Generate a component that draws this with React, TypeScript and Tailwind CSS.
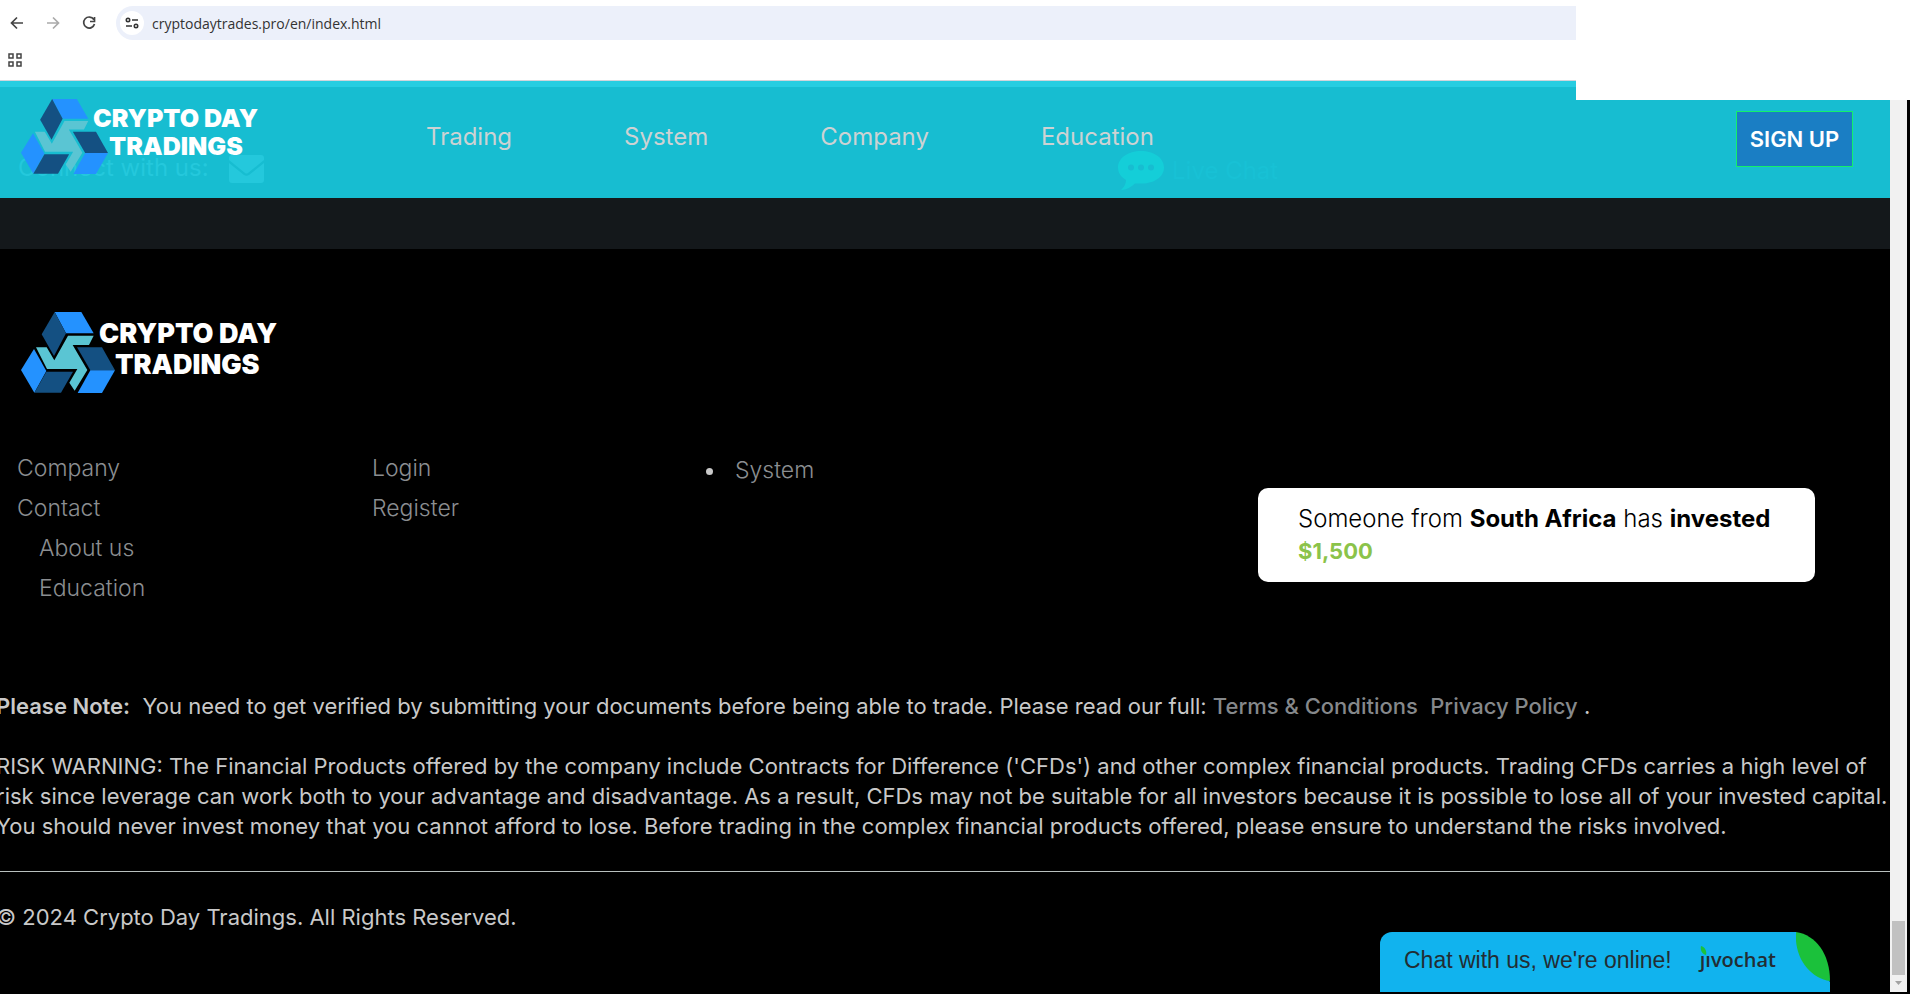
import React from "react";

const navItems = ["Trading", "System", "Company", "Education"];

const LogoMark = ({ className }: { className: string }) => (
  <svg viewBox="63 66 282 243" className={className} aria-hidden="true">
    <path d="M164 66h80l37 64h-83z" fill="#2492ff" />
    <path d="M164 66l34 64-36 68-37-65z" fill="#145082" />
    <path d="M204 137h77l-14 28h-49l44 75-38 62-16-24 24-41h-91l-33-65h32l23 39z" fill="#5ac5d3" />
    <path d="M231 172h75l39 69h-74z" fill="#145082" />
    <path d="M271 241h74l-39 68h-73z" fill="#2492ff" />
    <path d="M102 177l37 66-36 65-40-68z" fill="#2492ff" />
    <path d="M139 245h80l-36 63h-80z" fill="#145082" />
  </svg>
);

const BrowserBar = () => (
  <div className="h-[81px] border-b border-gray-300 bg-white font-['Open_Sans',sans-serif]">
    <div className="flex h-[46px] items-center pl-2">
      <button type="button" aria-label="Back" className="w-9 text-[#444]">
        <svg viewBox="0 0 18 18" className="size-[18px]" fill="none" stroke="currentColor" strokeWidth="1.7">
          <path d="M15 9H4M9 3.500L3.500 9 9 14.500" />
        </svg>
      </button>
      <button type="button" aria-label="Forward" className="w-9 text-[#aaa]">
        <svg viewBox="0 0 18 18" className="size-[18px]" fill="none" stroke="currentColor" strokeWidth="1.7">
          <path d="M3 9h11M9 3.500L14.500 9 9 14.500" />
        </svg>
      </button>
      <button type="button" aria-label="Reload" className="w-9 text-[#444]">
        <svg viewBox="0 0 18 18" className="size-[18px]" fill="none" stroke="currentColor" strokeWidth="1.7">
          <path d="M13.800 5.500A5.500 5.500 0 1 0 14.500 10M14.500 3v4.500H10" />
        </svg>
      </button>
      <div className="flex h-[34px] flex-1 items-center rounded-l-full bg-[#ecf0fa] pl-1">
        <span className="flex size-6 items-center justify-center rounded-full bg-white text-[#333]">
          <svg viewBox="0 0 14 14" className="size-[14px]" fill="none" stroke="currentColor" strokeWidth="1.6">
            <circle cx="3" cy="4" r="1.700" />
            <path d="M7 4h6M1 10h6" />
            <circle cx="11" cy="10" r="1.700" />
          </svg>
        </span>
        <input
          aria-label="Address"
          defaultValue="cryptodaytrades.pro/en/index.html"
          className="ml-2 h-6 flex-1 bg-transparent text-sm text-[#333] outline-none"
        />
      </div>
    </div>
    <button type="button" aria-label="Apps" className="ml-2 block pt-[7px] text-[#444]">
      <svg viewBox="0 0 14 14" className="size-[14px]" fill="none" stroke="currentColor" strokeWidth="1.500">
        <path d="M1 1h4v4H1zM9 1h4v4H9zM1 9h4v4H1zM9 9h4v4H9z" />
      </svg>
    </button>
  </div>
);

const SiteHeader = () => (
  <header className="relative h-[117px] border-t-[6px] border-[#27cde1] bg-[#17bdd1]">
    {/* Contact strip showing faintly through the header */}
    <div className="absolute top-[65px] left-[18px] flex items-center gap-5 text-[#24c8dc]">
      <span className="text-2xl">Connect with us:</span>
      <svg viewBox="0 0 35 28" className="mt-0.5 h-7 w-[35px]">
        <path d="M3 0h29q3 0 3 3v2L19 18q-1.500 1-3 0L0 5V3q0-3 3-3z" fill="currentColor" />
        <path d="M0 8l15 12q2.500 1.500 5 0L35 8v17q0 3-3 3H3q-3 0-3-3z" fill="currentColor" />
      </svg>
    </div>
    <div className="absolute top-[64px] left-[1118px] flex items-center gap-2 text-[#18c1d5]">
      <svg viewBox="0 0 46 39" className="h-[39px] w-[46px]">
        <path d="M23 0c13 0 23 7 23 16.500S36 32.500 24 32.500h-7C13 36 9 39 3 39c3-3 5-6 5-10C3 26 0 22 0 16.500 0 7 10 0 23 0z" fill="#14ced8" />
        <g fill="#17bdd1">
          <circle cx="13" cy="16.500" r="3" />
          <circle cx="23" cy="16.500" r="3" />
          <circle cx="33" cy="16.500" r="3" />
        </g>
      </svg>
      <span className="text-2xl">Live Chat</span>
    </div>

    <div className="relative flex items-start">
      <a href="#" className="ml-[21px] flex w-[405px] pt-3 text-white">
        <LogoMark className="h-[75px] w-[87px]" />
        <span className="-ml-[15px] pt-[5px] text-[25px] leading-7 font-black">
          <span className="block">CRYPTO DAY</span>
          <span className="block pl-4">TRADINGS</span>
        </span>
      </a>
      <nav className="flex gap-28 pt-9 text-2xl leading-7 text-[#cdd2d3]">
        {navItems.map((item) => (
          <a key={item} href="#">{item}</a>
        ))}
      </nav>
      <a
        href="#"
        className="mt-6 mr-[37px] ml-auto flex h-14 w-[117px] items-center justify-center border border-[#13f06b] bg-[#1a7ec4] text-[22px] font-semibold text-white"
      >
        SIGN UP
      </a>
    </div>
  </header>
);

const SiteFooter = () => (
  <footer className="flex-1 bg-black pt-[63px] text-[#c9c9c9]">
    <a href="#" className="ml-[21px] flex text-white">
      <LogoMark className="h-[81px] w-[94px]" />
      <span className="-ml-4 pt-[6px] text-[27px] leading-[31px] font-black">
        <span className="block">CRYPTO DAY</span>
        <span className="block pl-4">TRADINGS</span>
      </span>
    </a>

    <div className="mt-[55px] flex pl-[17px] text-[23px] leading-10 font-light text-[#8b8e91]">
      <ul className="w-[355px]">
        <li><a href="#">Company</a></li>
        <li><a href="#">Contact</a></li>
        <li className="pl-[22px]"><a href="#">About us</a></li>
        <li className="pl-[22px]"><a href="#">Education</a></li>
      </ul>
      <ul className="w-[355px]">
        <li><a href="#">Login</a></li>
        <li><a href="#">Register</a></li>
      </ul>
      <ul className="list-disc pt-0.5 marker:text-[#c9c9c9]">
        <li className="pl-2"><a href="#">System</a></li>
      </ul>
    </div>

    <div className="-ml-1 pt-[83px] text-[22px] leading-[30px]">
      <p>
        <strong className="font-semibold">Please Note:</strong>&nbsp; You need to get verified by submitting your
        documents before being able to trade. Please read our full:{" "}
        <a href="#" className="font-medium text-[#85888b]">Terms &amp; Conditions</a>&nbsp;{" "}
        <a href="#" className="font-medium text-[#85888b]">Privacy Policy</a> .
      </p>
      <p className="mt-[30px]">
        RISK WARNING: The Financial Products offered by the company include Contracts for Difference ('CFDs') and other
        complex financial products. Trading CFDs carries a high level of<br />
        risk since leverage can work both to your advantage and disadvantage. As a result, CFDs may not be suitable for
        all investors because it is possible to lose all of your invested capital.<br />
        You should never invest money that you cannot afford to lose. Before trading in the complex financial products
        offered, please ensure to understand the risks involved.
      </p>
      <hr className="mt-[30px] border-[#b9c0be]" />
      <p className="mt-[30px]">© 2024 Crypto Day Tradings. All Rights Reserved.</p>
    </div>
  </footer>
);

const InvestToast = () => (
  <div className="absolute top-[488px] right-[95px] w-[557px] rounded-[10px] bg-white py-[15px] pl-10 text-2xl leading-8 font-light text-black">
    Someone from <b className="font-bold">South Africa</b> has <b className="font-bold">invested</b>
    <div className="text-[22px] leading-8 font-bold text-[#8bc34a]">$1,500</div>
  </div>
);

const ChatBar = () => (
  <button
    type="button"
    className="absolute right-20 bottom-0.5 flex h-[60px] w-[450px] items-center overflow-hidden rounded-tl-xl bg-[#11b3ee] pb-1 pl-6 text-[#222d33]"
  >
    <span className="font-['Liberation_Sans',sans-serif] text-[23px]">Chat with us, we're online!</span>
    <span className="relative ml-7 font-['Open_Sans',sans-serif] text-xl font-semibold">
      jıvochat
      {/* Leaf in place of the dot of the j */}
      <svg viewBox="0 0 8 9" className="absolute top-0 -left-px h-[9px] w-2">
        <path d="M0 0h8v9H0z" fill="#11b3ee" />
        <path d="M2 0c4 1 6 5 5 9C3 8 1 4 2 0z" fill="#1bc13b" />
      </svg>
    </span>
    <svg viewBox="0 0 34 50" className="absolute top-0 right-0 h-[50px] w-[34px]">
      <path d="M0 0h34v50z" fill="#000" />
      <path d="M0 0C20 3 34 22 34 49 14 46-2 26 0 0z" fill="#1bc13b" />
    </svg>
  </button>
);

export default function App() {
  return (
    <div className="relative flex min-h-screen flex-col overflow-hidden bg-black font-['Inter',sans-serif]">
      <BrowserBar />
      <div className="mr-[3px] flex flex-1">
        <main className="flex min-w-0 flex-1 flex-col">
          <SiteHeader />
          <div className="h-[51px] bg-[#14181b]" />
          <SiteFooter />
        </main>
        <div className="mb-0.5 flex w-[17px] flex-col items-center justify-end bg-[#f1f1f1]">
          <div className="h-[54px] w-[13px] bg-[#c1c1c1]" />
          <svg viewBox="0 0 17 17" className="size-[17px]"><path d="M5 6h7l-3.500 4z" fill="#a3a3a3" /></svg>
        </div>
      </div>
      <div className="absolute top-0 right-0 h-[100px] w-[334px] bg-white" />
      <InvestToast />
      <ChatBar />
    </div>
  );
}
